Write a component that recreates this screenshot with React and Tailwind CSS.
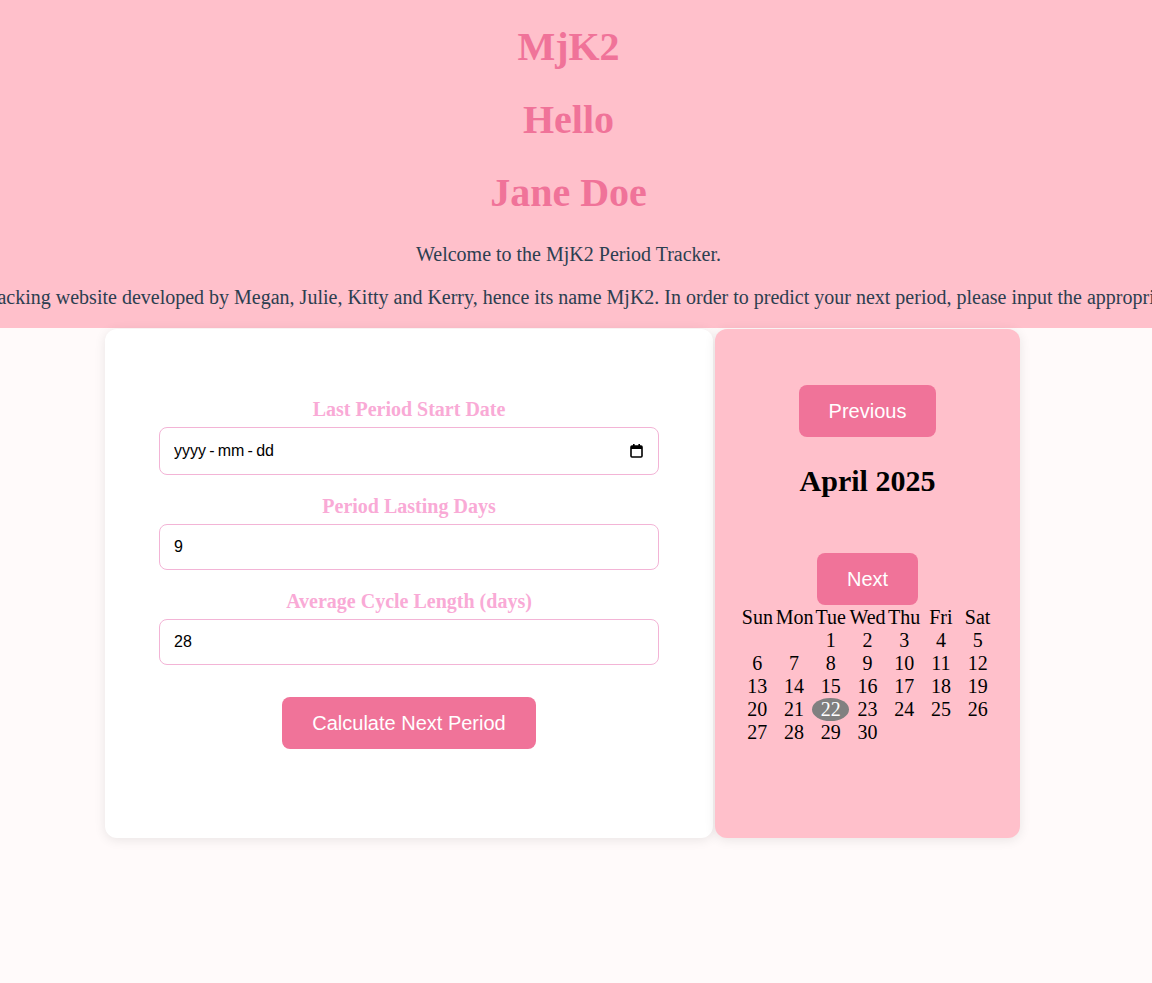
import React from 'react';

const weekDays = ['Sun', 'Mon', 'Tue', 'Wed', 'Thu', 'Fri', 'Sat'];

function CalendarIcon() {
  return (
    <svg width="13" height="14" viewBox="0 0 13 14" fill="none">
      <rect x="1" y="2" width="11" height="11" rx="1" stroke="#000" strokeWidth="1.6" />
      <rect x="1" y="2" width="11" height="3" fill="#000" />
      <rect x="3" y="0" width="1.6" height="3" fill="#000" />
      <rect x="8.4" y="0" width="1.6" height="3" fill="#000" />
    </svg>
  );
}

function PeriodForm() {
  return (
    <div className="w-[608px] h-[509px] bg-white rounded-xl shadow-[0_2px_12px_rgba(0,0,0,0.09)]">
      <form className="w-[500px] mx-auto pt-[69px] flex flex-col" onSubmit={(e) => e.preventDefault()}>
        <label className="block text-center text-[20px] leading-[23px] font-bold text-[#f9aad6] mb-[6px]">
          Last Period Start Date
        </label>
        <div className="relative">
          <input
            type="text"
            placeholder={'yyyy\u2009-\u2009mm\u2009-\u2009dd'}
            className="w-full h-[48px] px-[14px] border border-[#f3b4d6] rounded-lg text-[16px] font-['Liberation_Sans',sans-serif] text-black placeholder:text-black outline-none"
          />
          <div className="absolute right-[16px] top-[17px] pointer-events-none">
            <CalendarIcon />
          </div>
        </div>

        <label className="block mt-[20px] text-center text-[20px] leading-[23px] font-bold text-[#f9aad6] mb-[6px]">
          Period Lasting Days
        </label>
        <input
          type="text"
          defaultValue="9"
          className="w-full h-[46px] px-[14px] border border-[#f3b4d6] rounded-lg text-[16px] font-['Liberation_Sans',sans-serif] text-black outline-none"
        />

        <label className="block mt-[20px] text-center text-[20px] leading-[23px] font-bold text-[#f9aad6] mb-[6px]">
          Average Cycle Length (days)
        </label>
        <input
          type="text"
          defaultValue="28"
          className="w-full h-[46px] px-[14px] border border-[#f3b4d6] rounded-lg text-[16px] font-['Liberation_Sans',sans-serif] text-black outline-none"
        />

        <button
          type="submit"
          className="self-center mt-[32px] h-[52px] px-[30px] rounded-lg bg-[#f07399] text-white text-[20px] font-['Liberation_Sans',sans-serif]"
        >
          Calculate Next Period
        </button>
      </form>
    </div>
  );
}

function Calendar() {
  const cells = [null, null];
  for (let d = 1; d <= 30; d++) cells.push(d);

  return (
    <div className="ml-[2px] w-[305px] h-[509px] bg-[#ffc0cb] rounded-xl shadow-[0_2px_12px_rgba(0,0,0,0.09)] flex flex-col items-center pt-[56px]">
      <button className="h-[52px] px-[30px] rounded-lg bg-[#f07399] text-white text-[20px] font-['Liberation_Sans',sans-serif]">
        Previous
      </button>
      <h2 className="mt-[27px] text-[30px] leading-[34px] font-bold text-black">April 2025</h2>
      <button className="mt-[55px] h-[52px] px-[30px] rounded-lg bg-[#f07399] text-white text-[20px] font-['Liberation_Sans',sans-serif]">
        Next
      </button>
      <div className="mt-px w-[257px] grid grid-cols-7 text-[20px] leading-[23px] text-black text-center">
        {weekDays.map((d) => (
          <div key={d} className="whitespace-nowrap">{d}</div>
        ))}
        {cells.map((d, i) => (
          <div
            key={i}
            className={d === 22 ? 'bg-[#808080] text-white rounded-[50%]' : ''}
          >
            {d}
          </div>
        ))}
      </div>
    </div>
  );
}

export default function App() {
  return (
    <div className="min-h-[983px] bg-[#fffafa] font-['Liberation_Serif',serif]">
      <header className="bg-[#ffc0cb] flex flex-col items-center overflow-hidden pt-[24px] pb-[19px] pr-[15px]">
        <h1 className="text-[40px] leading-[46px] font-bold text-[#f07399]">MjK2</h1>
        <h1 className="mt-[27px] text-[40px] leading-[46px] font-bold text-[#f07399]">Hello</h1>
        <h1 className="mt-[27px] text-[40px] leading-[46px] font-bold text-[#f07399]">Jane Doe</h1>
        <p className="mt-[27px] text-[20px] leading-[23px] text-[#2c3e50]">
          Welcome to the MjK2 Period Tracker.
        </p>
        <p className="mt-[20px] text-[20px] leading-[23px] text-[#2c3e50] whitespace-nowrap">
          MjK2 is a period tracking website developed by Megan, Julie, Kitty and Kerry, hence its name MjK2. In order to predict your next period, please input the appropriate details below.
        </p>
      </header>

      <div className="flex pl-[105px] pt-px">
        <PeriodForm />
        <Calendar />
      </div>
    </div>
  );
}
